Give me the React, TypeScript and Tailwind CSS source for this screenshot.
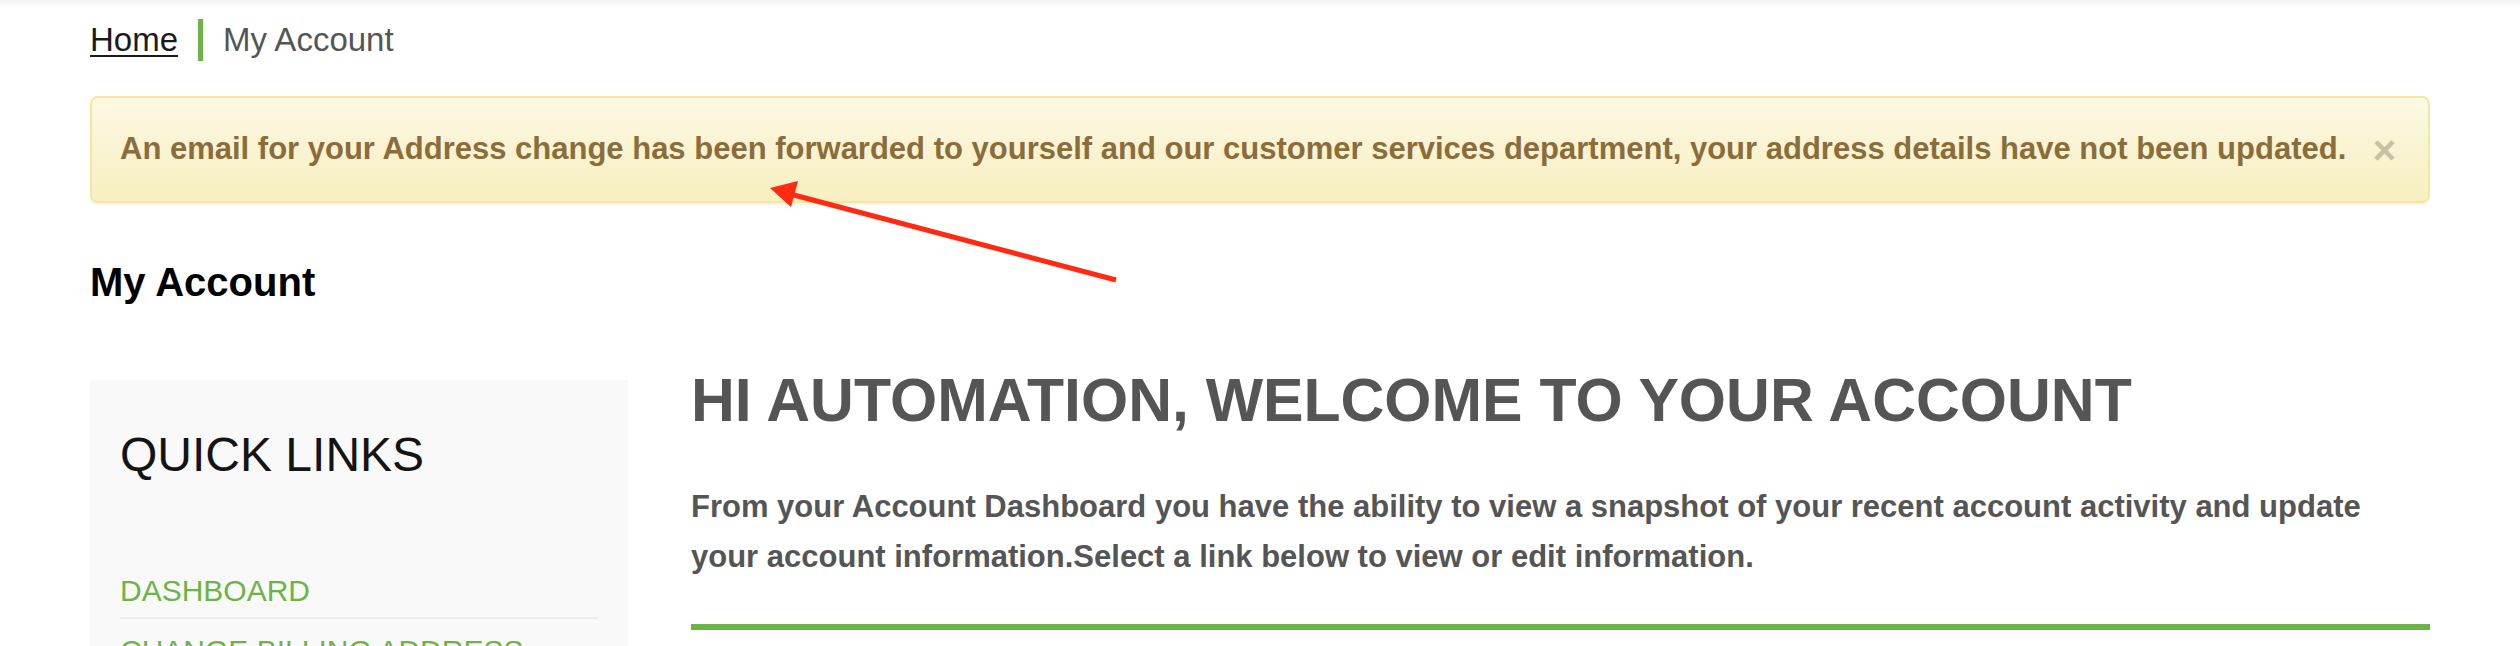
export default function App() {
  return (
    <div className="relative h-[646px] w-full overflow-hidden bg-white font-['Liberation_Sans',Arial,sans-serif]">
      {/* faint header shadow */}
      <div className="h-[8px] bg-gradient-to-b from-[#f2f2f2] to-white" />

      <div className="px-[90px]">
        {/* breadcrumb */}
        <div className="flex items-center text-[33px] leading-[64px]">
          <a className="text-[#1a1a1a] underline decoration-2 underline-offset-4">Home</a>
          <span className="mx-[20px] h-[42px] w-[5px] bg-[#6db446]" />
          <span className="text-[#555555]">My Account</span>
        </div>

        {/* alert */}
        <div className="mt-[24px] flex h-[107px] items-center justify-between rounded-[8px] border-2 border-[#f5e79e] bg-gradient-to-b from-[#fcf8e3] to-[#f8efc0] pl-[28px] pr-[32px] shadow-[0_2px_2px_rgba(0,0,0,0.05)]">
          <p className="text-[31px] font-bold text-[#8a6d3b]">
            An email for your Address change has been forwarded to yourself and our customer services department, your address details have not been updated.
          </p>
          <span className="text-[40px] font-bold leading-none text-[#c9c2a2]">×</span>
        </div>

        <h2 className="mt-[55px] text-[40px] font-bold leading-[48px] text-black">My Account</h2>

        <div className="mt-[74px] flex">
          {/* sidebar */}
          <aside className="w-[538px] shrink-0 bg-[#f9f9f9] px-[30px] pt-[47px]">
            <h3 className="text-[48px] leading-[56px] text-[#141414]">QUICK LINKS</h3>
            <ul className="mt-[92px] text-[30px] text-[#6db446]">
              <li className="border-b-2 border-[#ececec] pb-[10px] leading-[32px]">DASHBOARD</li>
              <li className="pt-[16px] leading-[32px]">CHANGE BILLING ADDRESS</li>
            </ul>
          </aside>

          {/* main */}
          <main className="ml-[63px] flex-1">
            <h1 className="-mt-[16px] text-[60.7px] font-bold leading-[72px] text-[#555555]">
              HI AUTOMATION, WELCOME TO YOUR ACCOUNT
            </h1>
            <p className="mt-[46px] max-w-[1710px] text-[31px] font-bold leading-[50px] text-[#555555]">
              From your Account Dashboard you have the ability to view a snapshot of your recent account activity and update your account information.Select a link below to view or edit information.
            </p>
            <div className="mt-[42px] h-[6px] bg-[#6db446]" />
          </main>
        </div>
      </div>

      {/* annotation arrow */}
      <svg className="pointer-events-none absolute left-0 top-0" width="2520" height="646">
        <line x1="1116" y1="280" x2="790" y2="194" stroke="#ff2a12" strokeWidth="5" />
        <polygon points="770,188 798,181 791,207" fill="#ff2a12" />
      </svg>
    </div>
  );
}
